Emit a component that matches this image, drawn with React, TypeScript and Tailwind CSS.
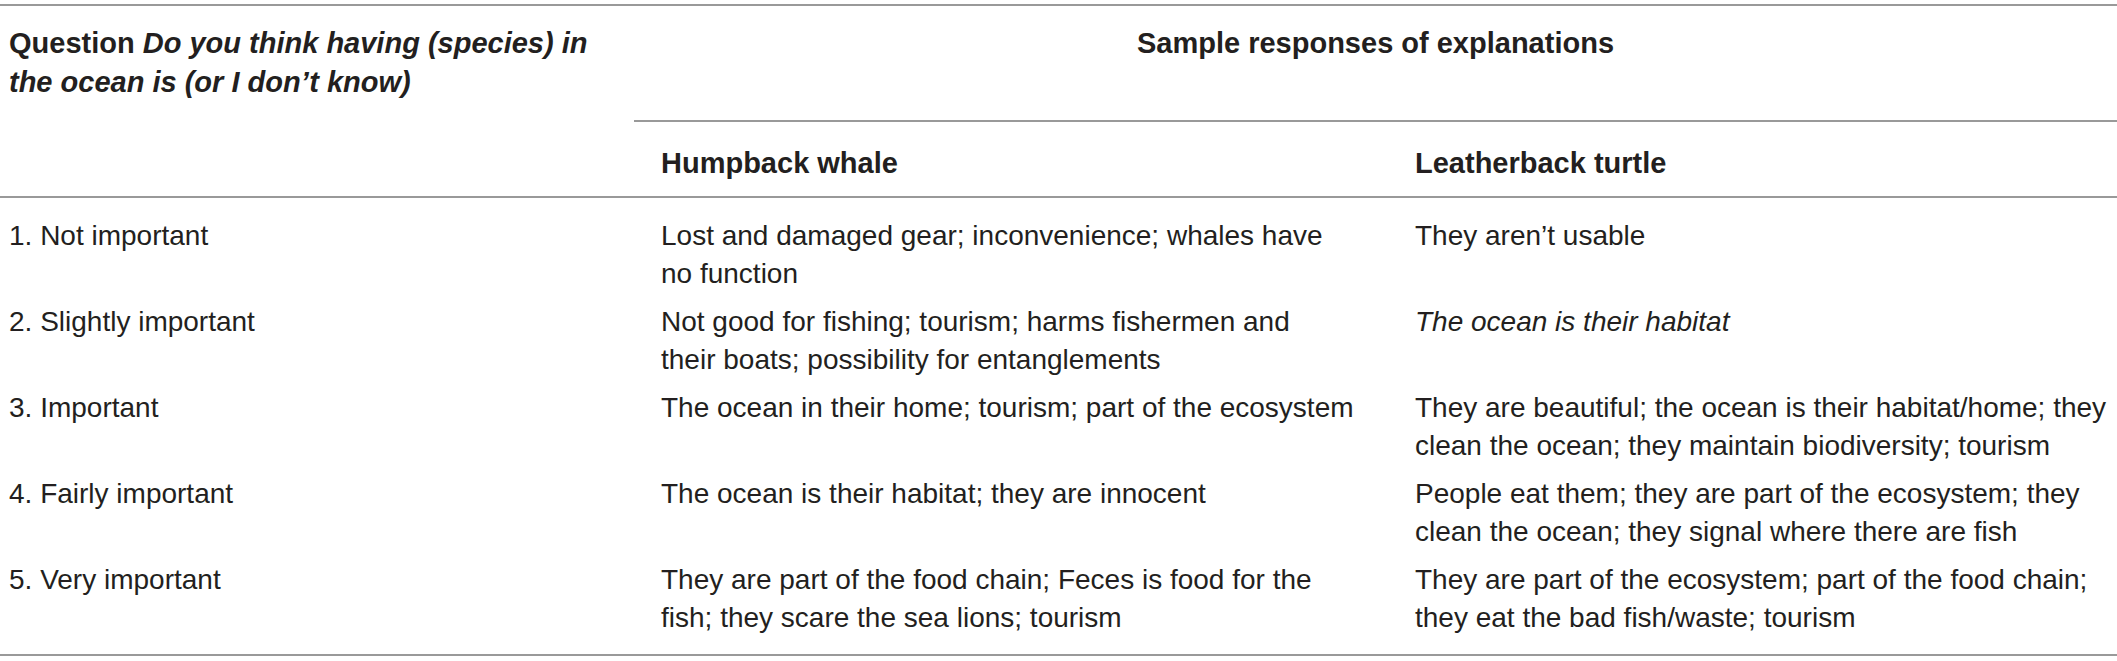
const rows: { label: string; whale: string[]; turtle: string[]; turtleItalic?: boolean }[] = [
  {
    label: "1. Not important",
    whale: ["Lost and damaged gear; inconvenience; whales have", "no function"],
    turtle: ["They aren’t usable"],
  },
  {
    label: "2. Slightly important",
    whale: ["Not good for fishing; tourism; harms fishermen and", "their boats; possibility for entanglements"],
    turtle: ["The ocean is their habitat"],
    turtleItalic: true,
  },
  {
    label: "3. Important",
    whale: ["The ocean in their home; tourism; part of the ecosystem"],
    turtle: ["They are beautiful; the ocean is their habitat/home; they", "clean the ocean; they maintain biodiversity; tourism"],
  },
  {
    label: "4. Fairly important",
    whale: ["The ocean is their habitat; they are innocent"],
    turtle: ["People eat them; they are part of the ecosystem; they", "clean the ocean; they signal where there are fish"],
  },
  {
    label: "5. Very important",
    whale: ["They are part of the food chain; Feces is food for the", "fish; they scare the sea lions; tourism"],
    turtle: ["They are part of the ecosystem; part of the food chain;", "they eat the bad fish/waste; tourism"],
  },
];

function Lines({ lines, italic }: { lines: string[]; italic?: boolean }) {
  return (
    <div className={italic ? "italic" : ""}>
      {lines.map((l, i) => (
        <div key={i} className="whitespace-nowrap">
          {l}
        </div>
      ))}
    </div>
  );
}

export default function App() {
  return (
    <div className="w-[2117px] h-[661px] bg-white font-['Liberation_Sans',Arial,sans-serif] text-[28px] leading-[38px] text-[#231f20]">
      <div className="h-[2px] bg-[#999999] mt-[4px]" />

      {/* header */}
      <div className="grid grid-cols-[634px_754px_1fr] font-bold text-[29px]">
        <div className="row-span-2 pl-[9px] pt-[18px] leading-[39px]">
          Question <i>Do you think having (species) in</i>
          <br />
          <i>the ocean is (or I don’t know)</i>
        </div>
        <div className="col-span-2 h-[116px] pt-[18px] border-b-2 border-[#999999] text-center">
          Sample responses of explanations
        </div>
        <div className="h-[74px] pt-[22px] pl-[27px]">Humpback whale</div>
        <div className="h-[74px] pt-[22px] pl-[27px]">Leatherback turtle</div>
      </div>

      <div className="h-[2px] bg-[#999999]" />

      {/* body */}
      <div className="grid grid-cols-[634px_754px_1fr] gap-y-[10px] pt-[19px] pb-[17px]">
        {rows.map((r) => (
          <div key={r.label} className="contents">
            <div className="h-[76px] pl-[9px] whitespace-nowrap">{r.label}</div>
            <div className="pl-[27px]">
              <Lines lines={r.whale} />
            </div>
            <div className="pl-[27px]">
              <Lines lines={r.turtle} italic={r.turtleItalic} />
            </div>
          </div>
        ))}
      </div>

      <div className="h-[2px] bg-[#999999]" />
    </div>
  );
}
